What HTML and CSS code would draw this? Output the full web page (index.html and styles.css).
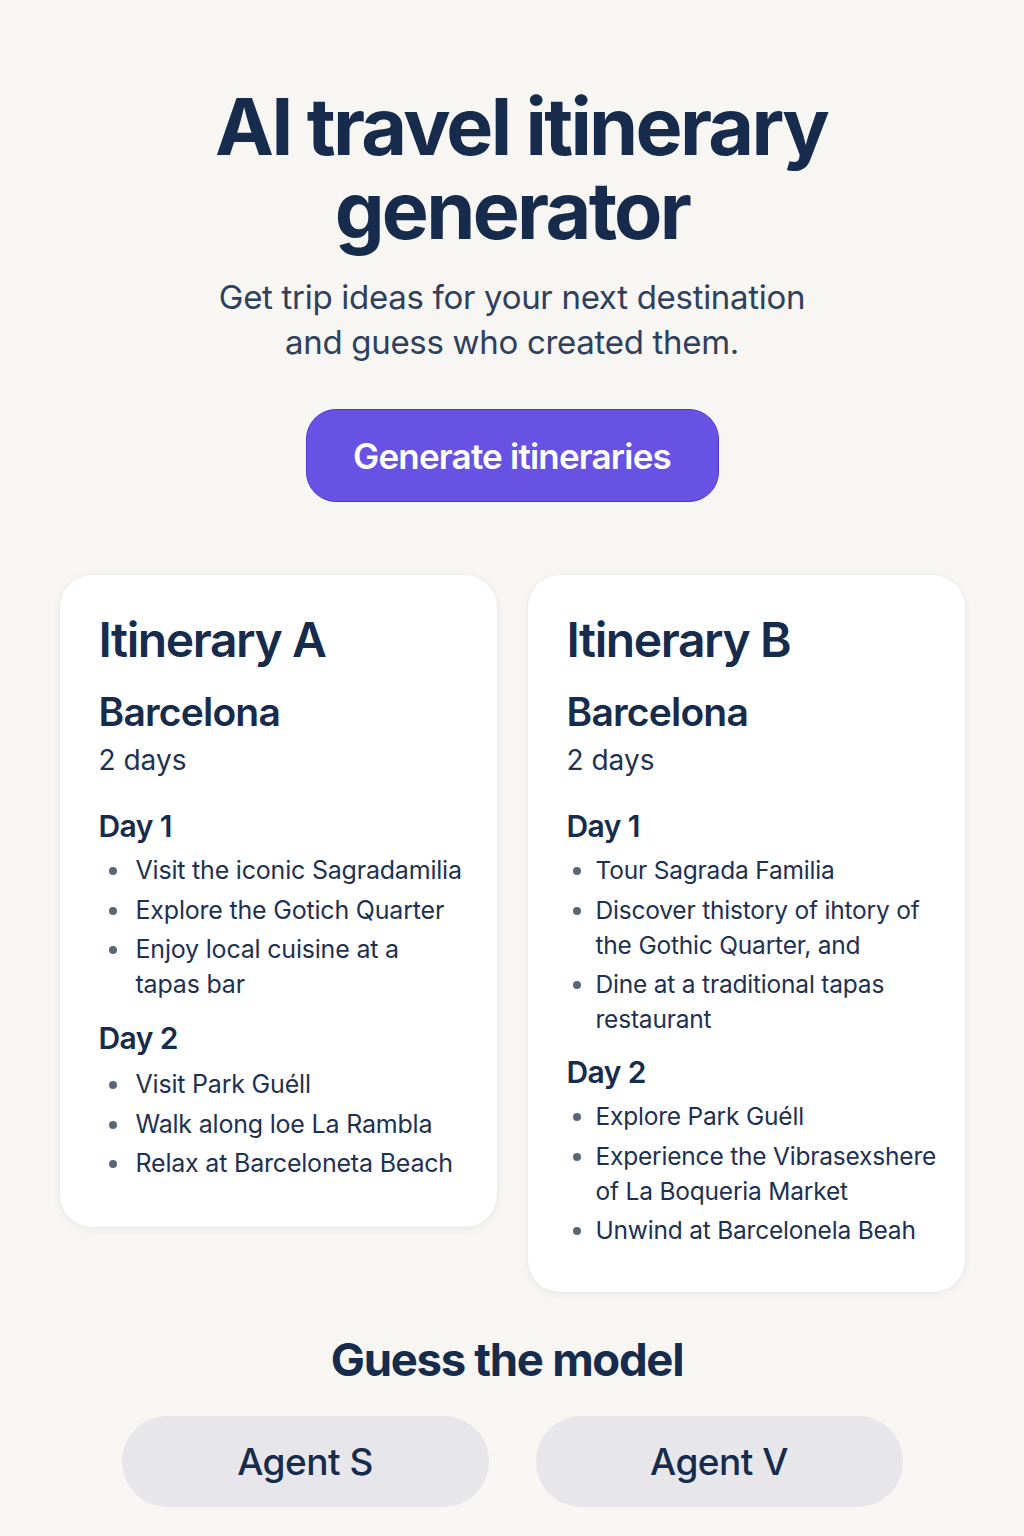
FILE: index.html
```html
<!DOCTYPE html>
<html lang="en">
<head>
<meta charset="utf-8">
<title>AI travel itinerary generator</title>
<link rel="stylesheet" href="styles.css">
</head>
<body>
<main class="page">
  <header class="hero">
    <h1 class="title"><span class="title-line">AI travel itinerary</span><span class="title-line">generator</span></h1>
    <p class="subtitle">Get trip ideas for your next destination<br>and guess who created them.</p>
    <button class="primary-btn" type="button">Generate itineraries</button>
  </header>

  <section class="cards">
    <article class="card card-a">
      <h2 class="card-title">Itinerary A</h2>
      <h3 class="city">Barcelona</h3>
      <p class="duration">2 days</p>
      <h4 class="day">Day 1</h4>
      <ul class="items">
        <li>Visit the iconic Sagradamilia</li>
        <li>Explore the Gotich Quarter</li>
        <li>Enjoy local cuisine at a<br>tapas bar</li>
      </ul>
      <h4 class="day">Day 2</h4>
      <ul class="items">
        <li>Visit Park Guéll</li>
        <li>Walk along loe La Rambla</li>
        <li>Relax at Barceloneta Beach</li>
      </ul>
    </article>

    <article class="card card-b">
      <h2 class="card-title">Itinerary B</h2>
      <h3 class="city">Barcelona</h3>
      <p class="duration">2 days</p>
      <h4 class="day">Day 1</h4>
      <ul class="items">
        <li>Tour Sagrada Familia</li>
        <li>Discover thistory of ihtory of<br>the Gothic Quarter, and</li>
        <li>Dine at a traditional tapas<br>restaurant</li>
      </ul>
      <h4 class="day">Day 2</h4>
      <ul class="items">
        <li>Explore Park Guéll</li>
        <li>Experience the Vibrasexshere<br>of La Boqueria Market</li>
        <li>Unwind at Barcelonela Beah</li>
      </ul>
    </article>
  </section>

  <section class="guess">
    <h2 class="guess-title">Guess the model</h2>
    <div class="agents">
      <button class="agent-btn" type="button">Agent S</button>
      <button class="agent-btn" type="button">Agent V</button>
    </div>
  </section>
</main>
</body>
</html>
```

FILE: styles.css
```css
* { box-sizing: border-box; }

html, body {
  margin: 0;
  padding: 0;
  background: #f8f6f3;
}

body {
  font-family: Inter, "Noto Sans", "Liberation Sans", sans-serif;
  color: #15294a;
}

.page {
  width: 905px;
  margin: 0 auto;
  padding-top: 84px;
  padding-bottom: 28px;
}

.hero {
  display: flex;
  flex-direction: column;
  align-items: center;
  text-align: center;
}

.title {
  margin: 0;
  display: flex;
  flex-direction: column;
  align-items: center;
  font-size: 79px;
  font-weight: 700;
  letter-spacing: -2.7px;
  color: #172c4d;
}

.title-line {
  display: block;
  line-height: 84px;
}

.title-line:first-child {
  padding-left: 18px;
}

.subtitle {
  margin: 23px 0 0;
  font-size: 33px;
  line-height: 45px;
  font-weight: 400;
  color: #2f405c;
  letter-spacing: -0.3px;
}

.primary-btn {
  margin-top: 44px;
  width: 413px;
  height: 93px;
  border-radius: 30px;
  border: 1.5px solid #4d38d6;
  background: #6852e3;
  color: #ffffff;
  font-family: inherit;
  font-size: 35px;
  font-weight: 600;
  letter-spacing: -0.8px;
}

.cards {
  margin-top: 73px;
  display: flex;
  align-items: flex-start;
  gap: 31px;
}

.card {
  flex: 1;
  background: #ffffff;
  border-radius: 32px;
  padding: 35px 20px 44px 39px;
  box-shadow: 0 2px 10px rgba(30, 30, 50, 0.06), 0 0 0 1px rgba(0, 0, 0, 0.02);
}

.card-a {
  padding-bottom: 46px;
}

.card-title {
  margin: 0;
  font-size: 48px;
  line-height: 60px;
  font-weight: 600;
  letter-spacing: -1.4px;
  color: #172c4d;
}

.city {
  margin: 18px 0 0;
  font-size: 39px;
  line-height: 48px;
  font-weight: 600;
  letter-spacing: -0.8px;
  color: #172c4d;
}

.duration {
  margin: 0;
  font-size: 28px;
  line-height: 48px;
  font-weight: 400;
  color: #1f3253;
}

.day {
  margin: 21px 0 0;
  font-size: 30px;
  line-height: 42px;
  font-weight: 600;
  letter-spacing: -0.6px;
  color: #172c4d;
}

.card .items + .day {
  margin-top: 14px;
}

.card-a .items + .day {
  margin-top: 15px;
}

.items {
  list-style: none;
  margin: 6px 0 0;
  padding: 0;
  display: flex;
  flex-direction: column;
  gap: 4.5px;
}

.card-a .items + .day + .items {
  margin-top: 8px;
}

.items li {
  position: relative;
  padding-left: 37px;
  font-size: 25px;
  line-height: 35px;
  font-weight: 400;
  color: #1e3152;
  letter-spacing: -0.2px;
}

.items li::before {
  content: "";
  position: absolute;
  left: 10px;
  top: 14px;
  width: 8px;
  height: 8px;
  border-radius: 50%;
  background: #5b6778;
}

.card-b .items li {
  padding-left: 29px;
  font-size: 24.5px;
}

.card-b .items li::before {
  left: 6px;
}

.guess {
  margin-top: 41px;
  display: flex;
  flex-direction: column;
  align-items: center;
}

.guess-title {
  margin: 0 10px 0 0;
  font-size: 45.5px;
  line-height: 54px;
  font-weight: 700;
  letter-spacing: -1.3px;
  color: #172c4d;
}

.agents {
  margin-top: 29px;
  display: flex;
  gap: 47px;
}

.agent-btn {
  width: 367px;
  height: 91px;
  border: none;
  border-radius: 46px;
  background: #e7e7eb;
  color: #172c4d;
  font-family: inherit;
  font-size: 37px;
  font-weight: 500;
  letter-spacing: -0.5px;
}
```
